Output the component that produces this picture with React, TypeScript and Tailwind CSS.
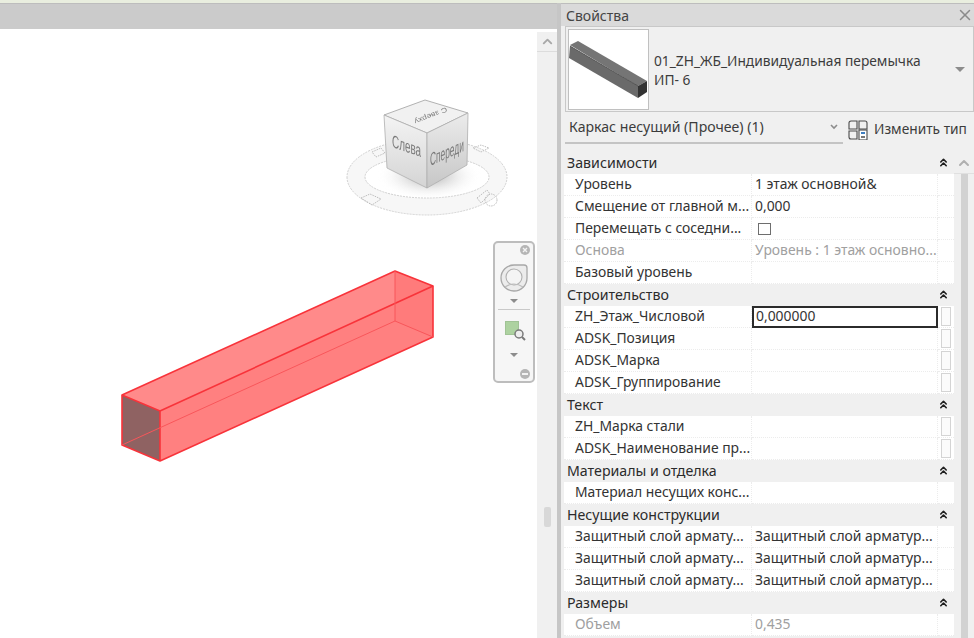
import { ChevronUp, ChevronsUp, X } from "lucide-react";

type Row = { label: string; value?: string; muted?: boolean; check?: boolean; active?: boolean; edit?: boolean };
type Section = { title: string; rows: Row[] };

const armor = "Защитный слой армату...";
const armorValue = "Защитный слой арматур...";

const sections: Section[] = [
  {
    title: "Зависимости",
    rows: [
      { label: "Уровень", value: "1 этаж основной&" },
      { label: "Смещение от главной м...", value: "0,000" },
      { label: "Перемещать с соседни...", check: true },
      { label: "Основа", value: "Уровень : 1 этаж основно...", muted: true },
      { label: "Базовый уровень" },
    ],
  },
  {
    title: "Строительство",
    rows: [
      { label: "ZH_Этаж_Числовой", value: "0,000000", active: true, edit: true },
      { label: "ADSK_Позиция", edit: true },
      { label: "ADSK_Марка", edit: true },
      { label: "ADSK_Группирование", edit: true },
    ],
  },
  {
    title: "Текст",
    rows: [
      { label: "ZH_Марка стали", edit: true },
      { label: "ADSK_Наименование пр...", edit: true },
    ],
  },
  { title: "Материалы и отделка", rows: [{ label: "Материал несущих конс..." }] },
  {
    title: "Несущие конструкции",
    rows: [
      { label: armor, value: armorValue },
      { label: armor, value: armorValue },
      { label: armor, value: armorValue },
    ],
  },
  { title: "Размеры", rows: [{ label: "Объем", value: "0,435", muted: true }] },
];

function Beam() {
  return (
    <svg className="absolute left-0 top-0" width="537" height="609" viewBox="0 29 537 609">
      <polygon points="122,395 395,271 433,286 160,411" fill="#ff8a8a" />
      <polygon points="160,411 433,286 433,337 160,461" fill="#ff8080" />
      <polygon points="395,271 433,286 433,337 395,321" fill="#ff7b7b" />
      <polygon points="122,395 160,411 160,461 122,445" fill="#8f6262" />
      <g fill="none" stroke="#f8333a" strokeWidth="1.6" strokeLinejoin="round">
        <polygon points="122,395 395,271 433,286 433,337 160,461 122,445" />
        <polyline points="122,395 160,411 160,461" />
        <line x1="160" y1="411" x2="433" y2="286" />
      </g>
      <g fill="none" stroke="#f8565a" strokeWidth="1">
        <line x1="122" y1="445" x2="395" y2="321" />
        <line x1="395" y1="271" x2="395" y2="321" />
        <line x1="395" y1="321" x2="433" y2="337" />
      </g>
    </svg>
  );
}

function ViewCube() {
  return (
    <svg className="absolute left-[340px] top-[65px] blur-[0.4px]" width="180" height="155" viewBox="340 94 180 155">
      <defs>
        <linearGradient id="leftFace" x1="0" y1="0" x2="0" y2="1">
          <stop offset="0" stopColor="#f4f4f4" />
          <stop offset="1" stopColor="#d4d4d4" />
        </linearGradient>
        <linearGradient id="rightFace" x1="0" y1="0" x2="0" y2="1">
          <stop offset="0" stopColor="#ececec" />
          <stop offset="1" stopColor="#c6c6c6" />
        </linearGradient>
        <radialGradient id="cubeShadow">
          <stop offset="0" stopColor="#a8a8a8" />
          <stop offset="1" stopColor="#ffffff" stopOpacity="0" />
        </radialGradient>
      </defs>
      <path
        fillRule="evenodd"
        d="M347 177a80 38 0 1 0 160 0a80 38 0 1 0 -160 0zM365 177a62 21 0 1 0 124 0a62 21 0 1 0 -124 0z"
        fill="#f7f7f7"
        stroke="#cfcfcf"
        strokeWidth="1"
        strokeDasharray="2 1"
      />
      <ellipse cx="429" cy="176" rx="52" ry="24" fill="url(#cubeShadow)" />
      <polygon points="384,115 425,100 468,113 427,133" fill="#f1f1f1" stroke="#a0a0a0" strokeWidth="0.8" />
      <polygon points="384,115 427,133 427,188 387,168" fill="url(#leftFace)" stroke="#aeaeae" strokeWidth="0.8" />
      <polygon points="427,133 468,113 467,165 427,188" fill="url(#rightFace)" stroke="#aeaeae" strokeWidth="0.8" />
      <g fontFamily="'Liberation Sans', sans-serif" fill="#7a7a7a">
        <text transform="translate(392 147) skewY(19) scale(0.9 1.6)" fontSize="11">Слева</text>
        <text transform="translate(430 166) skewY(-24) scale(0.76 1.65)" fontSize="11">Спереди</text>
        <text transform="translate(446 107) rotate(158) scale(0.85 0.7)" fontSize="10">С зверху</text>
      </g>
      <g fill="none" stroke="#bdbdbd" strokeWidth="1" strokeDasharray="1.5 1">
        <path d="M372 152l9 -4l4 5l-9 4z" />
        <path d="M473 148l8 -3l8 3l-8 4z" />
        <path d="M361 198l9 -4l11 5l-9 6z" />
        <circle cx="491" cy="200" r="6" />
        <path d="M477 198l10 -8l3 4l-9 9z" />
      </g>
    </svg>
  );
}

function NavBar() {
  return (
    <div className="absolute left-[493px] top-[212px] flex h-[142px] w-[42px] flex-col items-center rounded-[5px] border-2 border-[#bdbdbd] bg-[#f6f6f6]">
      <div className="flex h-[16px] w-full justify-end pr-[2px] pt-[1px]">
        <svg width="12" height="12" viewBox="0 0 12 12">
          <circle cx="6" cy="6" r="5" fill="#b5b5b5" />
          <path d="M4 4l4 4M8 4l-4 4" stroke="#f2f2f2" strokeWidth="1.4" />
        </svg>
      </div>
      <svg className="mt-[5px]" width="28" height="28" viewBox="0 0 28 28">
        <path d="M14 1h10a3 3 0 0 1 3 3v10a13 13 0 1 1 -13 -13z" fill="#ececec" stroke="#a8a8a8" strokeWidth="1.3" />
        <circle cx="14" cy="13" r="8" fill="#f4f4f4" stroke="#b0b0b0" strokeWidth="1.1" />
        <path d="M5 23q9 -6 18 0" fill="none" stroke="#bcbcbc" strokeWidth="1.1" />
      </svg>
      <div className="mt-[7px] h-0 w-0 border-x-[4px] border-t-[4px] border-x-transparent border-t-[#8c8c8c]" />
      <div className="mt-[6px] h-px w-[32px] bg-[#c9c9c9]" />
      <svg className="ml-[3px] mt-[11px]" width="22" height="20" viewBox="0 0 22 20">
        <rect x="0.5" y="0.5" width="13" height="13" fill="#add2a0" stroke="#a0c395" />
        <circle cx="14" cy="13" r="4" fill="#eeeeee" stroke="#7a7a7a" strokeWidth="1.5" />
        <path d="M17 16l3 3" stroke="#7a7a7a" strokeWidth="2" />
      </svg>
      <div className="mt-[12px] h-0 w-0 border-x-[4px] border-t-[4px] border-x-transparent border-t-[#8c8c8c]" />
      <div className="mt-auto flex w-full justify-end pb-[1px] pr-[2px]">
        <svg width="12" height="12" viewBox="0 0 12 12">
          <circle cx="6" cy="6" r="5" fill="#b5b5b5" />
          <rect x="3" y="5" width="6" height="2" fill="#f2f2f2" />
        </svg>
      </div>
    </div>
  );
}

function TableRow({ row }: { row: Row }) {
  const tone = row.muted ? "text-[#a0a0a0]" : "text-[#333333]";
  return (
    <div className={`grid h-[22px] grid-cols-[188px_186px_16px] bg-white leading-[19px] ${tone}`}>
      <div className="overflow-hidden whitespace-nowrap border-b border-r border-dotted border-[#ececec] pl-[11px]">
        {row.label}
      </div>
      {row.active ? (
        <div className="h-[22px] border-2 border-[#2b2b2b] pl-[2px] leading-[16px]">{row.value}</div>
      ) : (
        <div className="overflow-hidden whitespace-nowrap border-b border-r border-dotted border-[#ececec] pl-[3px]">
          {row.check ? <div className="ml-[3px] mt-[5px] h-[12px] w-[13px] border border-[#6e6e6e] bg-white" /> : row.value}
        </div>
      )}
      <div className="flex justify-center border-b border-dotted border-[#ececec] pt-[1px]">
        {row.edit && <div className="h-[19px] w-[10px] border border-[#d4d4d4] bg-[#fbfbfb]" />}
      </div>
    </div>
  );
}

export default function App() {
  return (
    <div
      className="flex h-[638px] w-[974px] flex-col overflow-hidden bg-white text-[13.9px] text-[#333333]"
      style={{ fontFamily: "'Noto Sans', 'Liberation Sans', sans-serif" }}
    >
      <div className="h-[3px] shrink-0 bg-[#e9eedf]" />
      <div className="flex min-h-0 flex-1">
        {/* model view */}
        <div className="flex w-[557px] shrink-0 flex-col">
          <div className="h-[26px] shrink-0 border-t border-[#bdbdbd] bg-[#cbcbcb]" />
          <div className="flex min-h-0 flex-1">
            <div className="relative min-w-0 flex-1 bg-white">
              <Beam />
              <ViewCube />
              <NavBar />
            </div>
            <div className="flex w-[20px] shrink-0 flex-col items-center bg-white">
              <div className="mt-[3px] flex h-[20px] w-full items-center justify-center border-b border-[#dcdcdc] bg-[#f0f0f0]">
                <ChevronUp size={15} strokeWidth={3} className="text-[#a8a8a8]" />
              </div>
              <div className="flex w-full flex-1 justify-center bg-[#f0f0f0] pt-[455px]">
                <div className="h-[20px] w-[7px] rounded-[2px] bg-[#d8d8d8]" />
              </div>
            </div>
          </div>
        </div>
        <div className="w-[4px] shrink-0 bg-[#c6c6c6]" />

        {/* properties panel */}
        <div className="flex min-w-0 flex-1 flex-col bg-[#f0f0f0]">
          <div className="flex h-[23px] shrink-0 items-center justify-between border-t border-[#bdbdbd] bg-[#dadada] pl-[5px] text-[14px] text-[#444444]">
            <span>Свойства</span>
            <X size={18} strokeWidth={2} className="text-[#8a8a8a]" />
          </div>
          <div className="ml-[4px] flex h-[86px] shrink-0 items-center border border-[#c8c8c8] bg-[#f0f0f0] pl-[2px]">
            <div className="h-[81px] w-[81px] shrink-0 border border-[#c0c0c0] bg-white">
              <svg width="79" height="79" viewBox="569 29 79 79">
                <polygon points="570,44 578,40 647,80 638,85" fill="#757575" />
                <polygon points="570,45 638,85 638,97 569,57" fill="#6a6a6a" />
                <polygon points="638,85 647,80 647,91 638,97" fill="#333333" />
                <line x1="570" y1="45" x2="638" y2="85" stroke="#444444" strokeWidth="0.8" />
              </svg>
            </div>
            <div className="ml-[5px] flex-1 pt-[1px] text-[13.75px] leading-[19px] text-[#3c3c3c]">
              <div className="whitespace-nowrap">01_ZH_ЖБ_Индивидуальная перемычка</div>
              <div>ИП- 6</div>
            </div>
            <div className="mr-[8px] h-0 w-0 border-x-[5px] border-t-[5px] border-x-transparent border-t-[#8c8c8c]" />
          </div>
          <div className="flex h-[40px] shrink-0 items-start">
            <div className="ml-[4px] flex h-[32px] w-[278px] shrink-0 items-center justify-between border-b-2 border-[#c4c4c4] pl-[4px] pr-[5px]">
              <span className="text-[14.1px] text-[#3c3c3c]">Каркас несущий (Прочее) (1)</span>
              <svg width="8" height="6" viewBox="0 0 8 6">
                <path d="M1 1l3 3l3 -3" fill="none" stroke="#8c8c8c" strokeWidth="1.6" />
              </svg>
            </div>
            <svg className="ml-[5px] mt-[8px] shrink-0" width="20" height="20" viewBox="0 0 20 20">
              <g fill="none" stroke="#4a4a4a" strokeWidth="1.1">
                <path d="M3 1h6v8h-8v-6a2 2 0 0 1 2 -2z" />
                <path d="M11 1h6a2 2 0 0 1 2 2v6h-8z" />
                <path d="M1 11h8v8h-6a2 2 0 0 1 -2 -2z" />
                <rect x="11" y="10" width="8" height="10" fill="#ffffff" />
              </g>
              <rect x="13" y="12" width="4" height="2" fill="#3f7fc1" />
              <rect x="13" y="16" width="4" height="2" fill="#777777" />
            </svg>
            <span className="ml-[6px] mt-[7px] whitespace-nowrap text-[13.75px] text-[#3c3c3c]">Изменить тип</span>
          </div>
          <div className="flex min-h-0 flex-1 pl-[3px]">
            <div className="w-[390px] shrink-0">
              {sections.map((section) => (
                <div key={section.title}>
                  <div className="flex h-[22px] items-center justify-between bg-[#f0f0f0] pb-[1px] pl-[3px] pr-[4px] text-[14.2px] text-[#2b2b2b]">
                    <span>{section.title}</span>
                    <ChevronsUp size={13} strokeWidth={3} className="text-[#1f1f1f]" />
                  </div>
                  {section.rows.map((row, i) => (
                    <TableRow key={i} row={row} />
                  ))}
                </div>
              ))}
            </div>
            <div className="flex min-w-0 flex-1 flex-col items-center bg-[#f0f0f0]">
              <div className="flex h-[22px] w-full items-center justify-center border-b border-[#e0e0e0]">
                <ChevronUp size={16} strokeWidth={3} className="text-[#b0b0b0]" />
              </div>
              <div className="w-[7px] flex-1 bg-[#d2d2d2]" />
            </div>
          </div>
        </div>
      </div>
    </div>
  );
}
